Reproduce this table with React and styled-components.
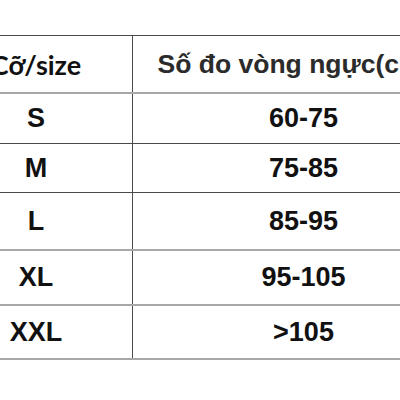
import React from "react";
import styled, { createGlobalStyle } from "styled-components";

const Global = createGlobalStyle`
  html, body { margin: 0; padding: 0; background: #fff; }
  body { width: 400px; height: 400px; overflow: hidden; }
`;

const Page = styled.div`
  width: 400px;
  height: 400px;
  overflow: hidden;
  background: #fff;
  padding-top: 35px;
  box-sizing: border-box;
`;

const Table = styled.div`
  margin-left: -60px;
  width: 534px;
  border-top: 1px solid #4a4a4a;
`;

const Row = styled.div`
  display: grid;
  grid-template-columns: 193px 341px;
  height: ${(p) => p.$h}px;
  box-sizing: border-box;
  border-bottom: ${(p) => (p.$light ? "2px solid #a8a8a8" : "1px solid #4a4a4a")};
`;

const Cell = styled.div`
  display: flex;
  align-items: center;
  justify-content: center;
  font-family: "Liberation Sans", Arial, sans-serif;
  font-weight: 700;
  font-size: 27px;
  color: #111;
  white-space: nowrap;
  &:first-child {
    border-right: 1px solid #4a4a4a;
  }
`;

const ValueHead = styled(Cell)`
  font-size: 26.5px;
  color: #2b2b2b;
  padding-right: 18px;
`;

const SizeHead = styled(Cell)`
  font-family: Lato, "Open Sans", sans-serif;
  font-size: 27px;
  color: #111;
`;

const rows = [
  { s: "S", v: "60-75", h: 50 },
  { s: "M", v: "75-85", h: 49 },
  { s: "L", v: "85-95", h: 58, light: true },
  { s: "XL", v: "95-105", h: 55, light: true },
  { s: "XXL", v: ">105", h: 54, light: true },
];

export default function App() {
  return (
    <Page>
      <Global />
      <Table>
        <Row $h={58} $light>
          <SizeHead>Cỡ/size</SizeHead>
          <ValueHead>Số đo vòng ngực(cm)</ValueHead>
        </Row>
        {rows.map((r) => (
          <Row key={r.s} $h={r.h} $light={r.light}>
            <Cell>{r.s}</Cell>
            <Cell>{r.v}</Cell>
          </Row>
        ))}
      </Table>
    </Page>
  );
}
